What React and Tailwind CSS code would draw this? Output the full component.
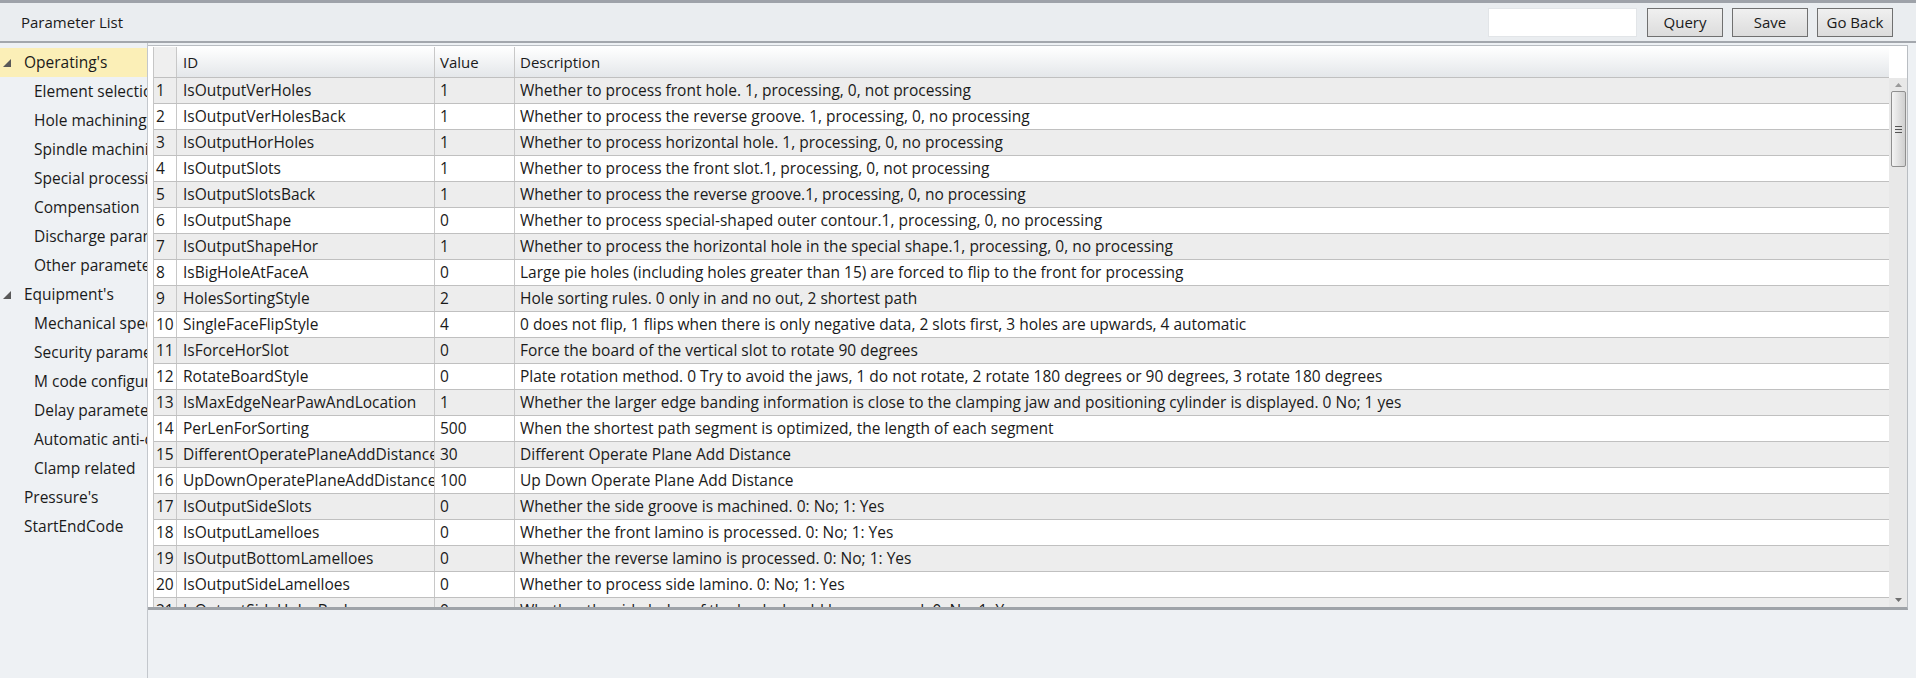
const rows = [
 ["1", "IsOutputVerHoles", "1", "Whether to process front hole. 1, processing, 0, not processing"],
 ["2", "IsOutputVerHolesBack", "1", "Whether to process the reverse groove. 1, processing, 0, no processing"],
 ["3", "IsOutputHorHoles", "1", "Whether to process horizontal hole. 1, processing, 0, no processing"],
 ["4", "IsOutputSlots", "1", "Whether to process the front slot.1, processing, 0, not processing"],
 ["5", "IsOutputSlotsBack", "1", "Whether to process the reverse groove.1, processing, 0, no processing"],
 ["6", "IsOutputShape", "0", "Whether to process special-shaped outer contour.1, processing, 0, no processing"],
 ["7", "IsOutputShapeHor", "1", "Whether to process the horizontal hole in the special shape.1, processing, 0, no processing"],
 ["8", "IsBigHoleAtFaceA", "0", "Large pie holes (including holes greater than 15) are forced to flip to the front for processing"],
 ["9", "HolesSortingStyle", "2", "Hole sorting rules. 0 only in and no out, 2 shortest path"],
 ["10", "SingleFaceFlipStyle", "4", "0 does not flip, 1 flips when there is only negative data, 2 slots first, 3 holes are upwards, 4 automatic"],
 ["11", "IsForceHorSlot", "0", "Force the board of the vertical slot to rotate 90 degrees"],
 ["12", "RotateBoardStyle", "0", "Plate rotation method. 0 Try to avoid the jaws, 1 do not rotate, 2 rotate 180 degrees or 90 degrees, 3 rotate 180 degrees"],
 ["13", "IsMaxEdgeNearPawAndLocation", "1", "Whether the larger edge banding information is close to the clamping jaw and positioning cylinder is displayed. 0 No; 1 yes"],
 ["14", "PerLenForSorting", "500", "When the shortest path segment is optimized, the length of each segment"],
 ["15", "DifferentOperatePlaneAddDistance", "30", "Different Operate Plane Add Distance"],
 ["16", "UpDownOperatePlaneAddDistance", "100", "Up Down Operate Plane Add Distance"],
 ["17", "IsOutputSideSlots", "0", "Whether the side groove is machined. 0: No; 1: Yes"],
 ["18", "IsOutputLamelloes", "0", "Whether the front lamino is processed. 0: No; 1: Yes"],
 ["19", "IsOutputBottomLamelloes", "0", "Whether the reverse lamino is processed. 0: No; 1: Yes"],
 ["20", "IsOutputSideLamelloes", "0", "Whether to process side lamino. 0: No; 1: Yes"],
 ["21", "IsOutputSideHolesBack", "0", "Whether the side holes of the back should be processed. 0: No; 1: Yes"],
];

const tree = [
 { label: "Operating's", open: true, selected: true },
 { label: "Element selection" },
 { label: "Hole machining" },
 { label: "Spindle machining" },
 { label: "Special processing" },
 { label: "Compensation" },
 { label: "Discharge parameters" },
 { label: "Other parameters" },
 { label: "Equipment's", open: true },
 { label: "Mechanical specifications" },
 { label: "Security parameters" },
 { label: "M code configuration" },
 { label: "Delay parameters" },
 { label: "Automatic anti-collision" },
 { label: "Clamp related" },
 { label: "Pressure's", top: true },
 { label: "StartEndCode", top: true },
];

const Arrow = () => (
 <svg width="10" height="10" viewBox="0 0 10 10" className="shrink-0">
  <polygon points="9,1 9,9 1,9" fill="#595959" />
 </svg>
);

const TreeItem = ({ item }) => {
 const isTop = item.open !== undefined || item.top;
 return (
  <div className={`h-[29px] flex items-center whitespace-nowrap ${item.selected ? "bg-[#fbefb7]" : ""}`}>
   {isTop ? (
    <>
     <div className="w-[24px] pl-[2px] flex items-center">{item.open && <Arrow />}</div>
     <span>{item.label}</span>
    </>
   ) : (
    <span className="pl-[34px]">{item.label}</span>
   )}
  </div>
 );
};

const Btn = ({ children }) => (
 <button className="w-[76px] h-[29px] border border-[#707070] bg-gradient-to-b from-[#f0f0f0] to-[#dcdcdc] text-[15px] text-[#1a1a1a]">
  {children}
 </button>
);

const App = () => {
 return (
  <div className="w-[1916px] h-[678px] flex flex-col bg-[#eef1f4] text-[15.5px] text-[#1a1a1a] font-['Open_Sans','Noto_Sans',sans-serif] overflow-hidden">
   {/* title bar */}
   <div className="h-[43px] shrink-0 border-t-[3px] border-b-2 border-t-[#9ea2a9] border-b-[#a3a7ad] bg-[#eaedf0] flex items-center pl-[21px] pr-[23px]">
    <span className="flex-1 text-[15px]">Parameter List</span>
    <div className="flex items-center gap-[9px]">
     <input type="text" className="w-[149px] h-[29px] bg-white border border-[#e2e5e8] outline-none mr-[1px]" />
     <Btn>Query</Btn>
     <Btn>Save</Btn>
     <Btn>Go Back</Btn>
    </div>
   </div>

   <div className="flex-1 flex min-h-0">
    {/* tree */}
    <div className="w-[147px] shrink-0 pt-[5px] overflow-hidden">
     {tree.map((t) => (
      <TreeItem key={t.label} item={t} />
     ))}
    </div>

    {/* main pane */}
    <div className="flex-1 border-l border-[#c3c7cc] pt-[2px] pr-[8px]">
     <div className="h-[565px] bg-white border-t border-r border-[#b9bdc2] border-b-[3px] border-b-[#9fa3a8] flex pl-[5px] pt-[1px] overflow-hidden">
      {/* grid */}
      <div className="flex-1 min-w-0 flex flex-col border-l border-[#c6c6c6]">
       <div className="h-[31px] shrink-0 flex border-b border-[#c0c0c0] text-[15px]">
        <div className="w-[23px] shrink-0 border-r border-[#c8c8c8] bg-[#efefef]"></div>
        <div className="w-[258px] shrink-0 border-r border-[#c8c8c8] bg-gradient-to-b from-[#ffffff] to-[#e4e7ea] flex items-center pl-[6px]">ID</div>
        <div className="w-[80px] shrink-0 border-r border-[#c8c8c8] bg-gradient-to-b from-[#ffffff] to-[#e4e7ea] flex items-center pl-[5px]">Value</div>
        <div className="flex-1 bg-gradient-to-b from-[#ffffff] to-[#e4e7ea] flex items-center pl-[5px]">Description</div>
       </div>
       <div className="flex-1 overflow-hidden">
        {rows.map((r, i) => (
         <div key={r[0]} className={`h-[26px] flex border-b border-[#c0c0c0] whitespace-nowrap ${i % 2 === 0 ? "bg-[#ededed]" : "bg-white"}`}>
          <div className="w-[23px] shrink-0 border-r border-[#c8c8c8] flex items-center pl-[2px] overflow-hidden">{r[0]}</div>
          <div className="w-[258px] shrink-0 border-r border-[#c8c8c8] flex items-center pl-[6px] overflow-hidden">{r[1]}</div>
          <div className="w-[80px] shrink-0 border-r border-[#c8c8c8] flex items-center pl-[5px] overflow-hidden">{r[2]}</div>
          <div className="flex-1 flex items-center pl-[5px] overflow-hidden">{r[3]}</div>
         </div>
        ))}
       </div>
      </div>

      {/* scrollbar */}
      <div className="w-[18px] shrink-0 flex flex-col">
       <div className="h-[31px] shrink-0 bg-white"></div>
       <div className="flex-1 bg-[#e8e8e8] flex flex-col items-center pt-[5px] pb-[5px]">
        <svg width="7" height="4" viewBox="0 0 7 4"><polygon points="3.5,0 7,4 0,4" fill="#9a9a9a" /></svg>
        <div className="mt-[4px] w-[15px] h-[76px] border border-[#8f8f8f] rounded-[2px] bg-gradient-to-r from-[#f4f4f4] to-[#cfcfcf] flex flex-col items-center justify-center gap-[2px]">
         <div className="w-[7px] h-px bg-[#555]"></div>
         <div className="w-[7px] h-px bg-[#555]"></div>
         <div className="w-[7px] h-px bg-[#555]"></div>
        </div>
        <div className="flex-1"></div>
        <svg width="7" height="4" viewBox="0 0 7 4"><polygon points="0,0 7,0 3.5,4" fill="#6f6f6f" /></svg>
       </div>
      </div>
     </div>
    </div>
   </div>
  </div>
 );
};

export default App;
